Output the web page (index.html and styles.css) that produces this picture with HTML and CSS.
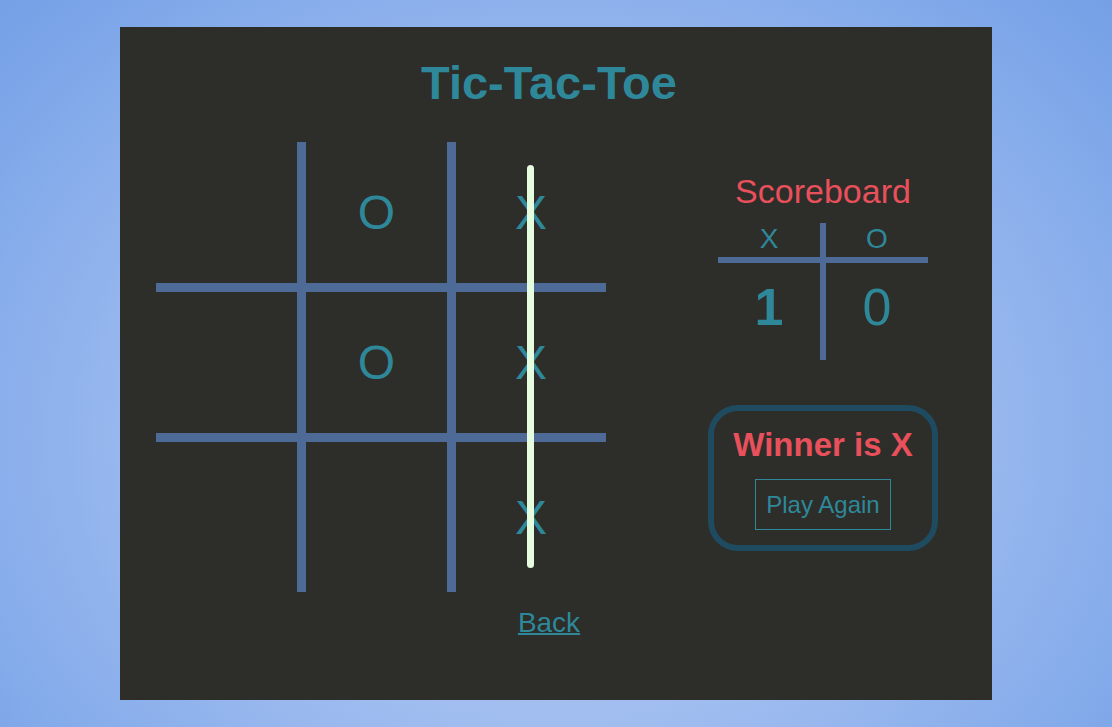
FILE: index.html
```html
<!DOCTYPE html>
<html lang="en">
<head>
<meta charset="utf-8">
<title>Tic-Tac-Toe</title>
<link rel="stylesheet" href="styles.css">
</head>
<body>
<div class="card">
  <h1 class="title">Tic-Tac-Toe</h1>
  <div class="main">
    <div class="board">
      <div class="cell"></div>
      <div class="cell">O</div>
      <div class="cell">X</div>
      <div class="cell"></div>
      <div class="cell">O</div>
      <div class="cell">X</div>
      <div class="cell"></div>
      <div class="cell"></div>
      <div class="cell">X</div>
      <div class="win-line"></div>
    </div>
    <div class="side">
      <div class="score-title">Scoreboard</div>
      <div class="scores">
        <div class="head left">X</div>
        <div class="head right">O</div>
        <div class="num left win">1</div>
        <div class="num right">0</div>
      </div>
      <div class="result">
        <div class="winner">Winner is X</div>
        <button class="again">Play Again</button>
      </div>
    </div>
  </div>
  <div class="back-row"><a class="back" href="#">Back</a></div>
</div>
</body>
</html>
```

FILE: styles.css
```css
html, body {
  margin: 0;
  padding: 0;
}
body {
  width: 1112px;
  height: 727px;
  overflow: hidden;
  font-family: "Liberation Sans", Arial, sans-serif;
  background: radial-gradient(ellipse 75% 95% at 50% 60%, #b6ccf4 0%, #a2bef0 40%, #7ea7e9 80%, #6e9be4 100%);
}
.card {
  box-sizing: border-box;
  width: 872px;
  height: 673px;
  margin: 27px auto 0;
  background: #2d2d29;
  padding: 28px 50px 0 36px;
}
.title {
  margin: 0;
  font-size: 47px;
  font-weight: bold;
  line-height: normal;
  text-align: center;
  color: #2e8899;
}
.main {
  display: flex;
  margin-top: 32px;
}
.board {
  position: relative;
  display: grid;
  grid-template-columns: repeat(3, 150px);
  grid-template-rows: repeat(3, 150px);
  width: 450px;
  height: 450px;
}
.cell {
  box-sizing: border-box;
  display: flex;
  align-items: center;
  justify-content: center;
  font-size: 48px;
  color: #2e8899;
  border-color: #4e6a96;
  border-style: solid;
  border-width: 0 9px 9px 0;
}
.cell:nth-child(3n) { border-right-width: 0; }
.cell:nth-child(n+7) { border-bottom-width: 0; }
.win-line {
  position: absolute;
  left: 371px;
  top: 23px;
  width: 7px;
  height: 403px;
  border-radius: 4px;
  background: #e6fcde;
}
.side {
  width: 230px;
  margin-left: 102px;
  display: flex;
  flex-direction: column;
  align-items: center;
}
.score-title {
  margin-top: 30px;
  font-size: 34px;
  line-height: 38px;
  color: #e8505c;
}
.scores {
  margin-top: 13px;
  width: 210px;
  display: grid;
  grid-template-columns: 1fr 1fr;
}
.head {
  height: 34px;
  line-height: 32px;
  font-size: 28px;
  text-align: center;
  color: #2e8899;
  border-bottom: 6px solid #4e6a96;
}
.left { border-right: 3px solid #4e6a96; }
.right { border-left: 3px solid #4e6a96; }
.num {
  font-size: 52px;
  line-height: 60px;
  padding: 14px 0 23px;
  text-align: center;
  color: #2e8899;
}
.num.win { font-weight: bold; }
.result {
  box-sizing: border-box;
  margin-top: 45px;
  width: 230px;
  height: 146px;
  border: 6px solid #1f4b60;
  border-radius: 30px;
  padding: 15px 0 0;
  display: flex;
  flex-direction: column;
  align-items: center;
}
.winner {
  font-size: 33px;
  font-weight: bold;
  line-height: 38px;
  color: #e8505c;
}
.again {
  margin-top: 15px;
  font-family: "Liberation Sans", Arial, sans-serif;
  font-size: 24px;
  line-height: 27px;
  padding: 11px 10px;
  background: transparent;
  color: #2e8899;
  border: 1px solid #2e8899;
}
.back-row {
  margin-top: 15px;
  text-align: center;
}
.back {
  font-size: 28px;
  color: #2e8899;
  text-decoration-thickness: 2px;
}
```
